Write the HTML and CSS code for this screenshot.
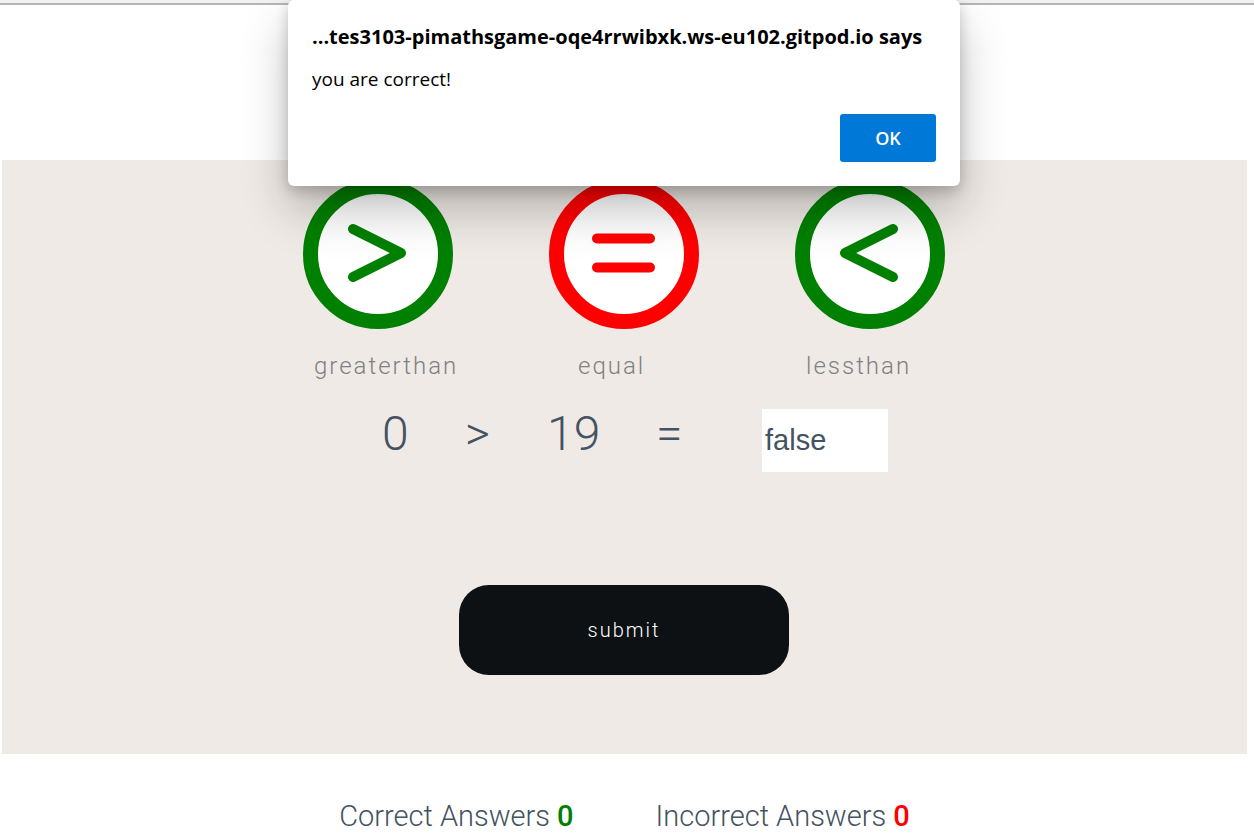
FILE: index.html
```html
<!DOCTYPE html>
<html lang="en">
<head>
<meta charset="utf-8">
<title>Pi Maths Game</title>
<link rel="stylesheet" href="styles.css">
</head>
<body>
<div class="topbar"></div>
<div class="page">
  <main class="game">
    <div class="operators">
      <button class="operator operator-green" type="button" aria-labelledby="label-greater">
        <svg viewBox="0 0 120 120" aria-hidden="true"><path d="M35 35 83 59 35 83"/></svg>
      </button>
      <button class="operator operator-red" type="button" aria-labelledby="label-equal">
        <svg viewBox="0 0 120 120" aria-hidden="true"><path d="M33 44.5H86M33 73.5H86"/></svg>
      </button>
      <button class="operator operator-green" type="button" aria-labelledby="label-less">
        <svg viewBox="0 0 120 120" aria-hidden="true"><path d="M83 35 35 59 83 83"/></svg>
      </button>
    </div>
    <div class="labels">
      <span id="label-greater">greaterthan</span>
      <span id="label-equal">equal</span>
      <span id="label-less">lessthan</span>
    </div>
    <form class="question">
      <span>0</span>
      <span>&gt;</span>
      <span>19</span>
      <label for="answer">=</label>
      <input class="answer" id="answer" type="text" value="false">
    </form>
    <button class="submit" type="button">submit</button>
  </main>
  <footer class="scores">
    <p>Correct Answers <span class="score score-correct">0</span></p>
    <p>Incorrect Answers <span class="score score-incorrect">0</span></p>
  </footer>
  <div class="dialog" role="alertdialog" aria-labelledby="dialog-title" aria-describedby="dialog-message">
    <h1 class="dialog-title" id="dialog-title">...tes3103-pimathsgame-oqe4rrwibxk.ws-eu102.gitpod.io says</h1>
    <p class="dialog-message" id="dialog-message">you are correct!</p>
    <button class="dialog-ok" type="button">OK</button>
  </div>
</div>
</body>
</html>
```
FILE: styles.css
```css
* { box-sizing: border-box; }

body {
  margin: 0;
  background: #fff;
  color: #445261;
  font-family: Roboto, "Liberation Sans", sans-serif;
  font-weight: 300;
}

button, input { font: inherit; border: 0; }
p, h1 { margin: 0; }

.topbar {
  height: 5px;
  background: #f1f1f1;
  border-bottom: 2px solid #b5b5b5;
}

.page { padding: 155px 7px 0 2px; }

.game {
  display: flex;
  flex-direction: column;
  align-items: center;
  padding: 19px 1px 79px 0;
  background: #efeae6;
}

.operators { display: flex; gap: 96px; }

.operator {
  width: 150px;
  height: 150px;
  padding: 0;
  border: 15px solid currentColor;
  border-radius: 50%;
  background: #fff;
}

.operator svg {
  display: block;
  fill: none;
  stroke: currentColor;
  stroke-width: 10;
  stroke-linecap: round;
  stroke-linejoin: round;
}

.operator-green { color: #008000; }
.operator-red { color: #f00; }

.labels {
  display: grid;
  grid-template-columns: 264px 228px 128px;
  margin-top: 19px;
  color: #808080;
  font-size: 24px;
  line-height: 36px;
  letter-spacing: 2px;
}

.question {
  display: grid;
  grid-template-columns: 83px 82px 109px 106px 126px;
  margin-top: 17px;
  padding: 8px 0 0 22px;
  font-size: 48px;
  line-height: 50px;
}

.answer {
  width: 100%;
  height: 63px;
  padding: 0 3px;
  background: #fff;
  color: #445261;
  font: 400 29px "Liberation Sans", Arial, sans-serif;
}

.submit {
  width: 330px;
  height: 90px;
  margin-top: 113px;
  border-radius: 30px;
  background: #0d1114;
  color: #fff;
  font-size: 20px;
  letter-spacing: 2px;
}

.scores {
  display: flex;
  justify-content: center;
  gap: 82px;
  padding-top: 44px;
  font-size: 29px;
  line-height: 36px;
}

.score { font-weight: 500; }
.score-correct { color: #008000; }
.score-incorrect { color: #f00; }

.dialog {
  position: absolute;
  top: 0;
  left: 2px;
  right: 8px;
  display: flex;
  flex-direction: column;
  width: 672px;
  margin: 0 auto;
  padding: 25px 24px 24px;
  border-radius: 6px;
  background: #fff;
  box-shadow: 0 24px 48px rgba(0, 0, 0, 0.24), 0 5px 14px rgba(0, 0, 0, 0.2);
  color: #000;
  font-family: "Open Sans", "Noto Sans", sans-serif;
  font-size: 19px;
  font-weight: 400;
}

.dialog-title {
  font-size: 20px;
  font-weight: 700;
  line-height: 24px;
  white-space: nowrap;
}

.dialog-message { margin-top: 18px; line-height: 24px; }

.dialog-ok {
  align-self: flex-end;
  width: 96px;
  height: 48px;
  margin-top: 23px;
  border-radius: 3px;
  background: #0078d7;
  color: #fff;
  font-size: 18px;
  font-weight: 600;
}
```
